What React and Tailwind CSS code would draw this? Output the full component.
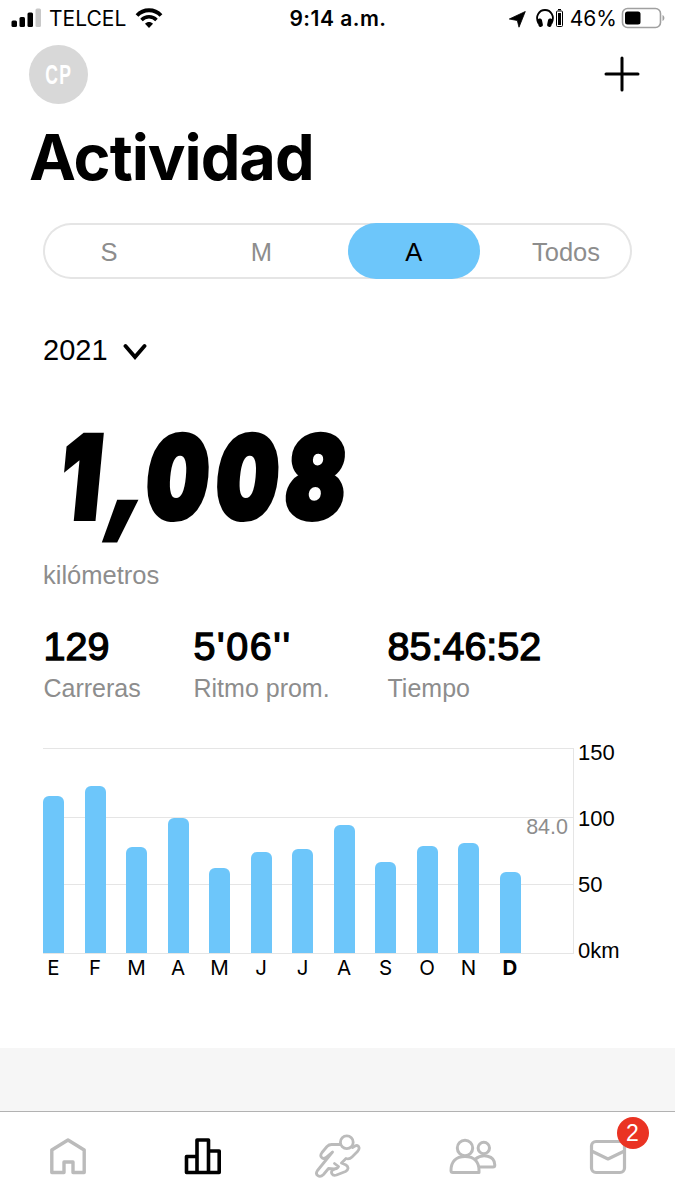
import { useState } from "react";

const ranges = ["S", "M", "A", "Todos"];

const stats = [
  { value: "129", label: "Carreras", width: "w-[150px]", tracking: "tracking-[0px]" },
  { value: "5'06''", label: "Ritmo prom.", width: "w-[194px]", tracking: "tracking-[1.6px]" },
  { value: "85:46:52", label: "Tiempo", width: "w-[200px]", tracking: "tracking-[0px]" },
];

// bar heights in px, the plot area is 205px for 150km
const months = [
  { name: "E", height: 157 },
  { name: "F", height: 167 },
  { name: "M", height: 106 },
  { name: "A", height: 135.5 },
  { name: "M", height: 85 },
  { name: "J", height: 101 },
  { name: "J", height: 104 },
  { name: "A", height: 128 },
  { name: "S", height: 91 },
  { name: "O", height: 107.5 },
  { name: "N", height: 110 },
  { name: "D", height: 81 },
];

const StatusBar = () => (
  <div className="flex h-[38px] items-center justify-between pl-[11px] pr-[10px] font-['Inter',sans-serif] text-[21px] text-black">
    <div className="flex w-[240px] items-center">
      <svg width="31" height="20" viewBox="0 0 31 20" className="mt-[-2px]">
        <rect x="0.500" y="12.5" width="5.500" height="6.5" rx="1.5" />
        <rect x="8.500" y="9" width="5.500" height="10" rx="1.5" />
        <rect x="16.500" y="4.500" width="5.500" height="14.500" rx="1.5" />
        <rect x="24.500" y="0.5" width="5.500" height="18.5" rx="1.5" fill="#c8c8c8" />
      </svg>
      <span className="ml-[7px]">TELCEL</span>
      <svg width="28" height="20" viewBox="0 0 28 20" className="ml-[9px] mt-[-2px]">
        <path d="M2 7.5C8.500 0.500 19.500 0.500 26 7.500" fill="none" stroke="#000" strokeWidth="3.800" />
        <path d="M6.500 12C10.500 7.700 17.500 7.700 21.500 12" fill="none" stroke="#000" strokeWidth="3.400" />
        <path d="M14 20l-4-4.200c2.200-2.300 5.800-2.300 8 0z" />
      </svg>
    </div>
    <span className="font-semibold tracking-[0.5px]">9:14 a.m.</span>
    <div className="flex w-[240px] items-center justify-end">
      <svg width="17" height="17" viewBox="0 0 17 17">
        <path d="M16.300 0.500 L10 16.200 L8.300 9.500 L0.300 8 Z" strokeLinejoin="round" stroke="#000" strokeWidth="0.800" />
      </svg>
      <svg width="28" height="20" viewBox="0 0 28 20" className="ml-[10px] mt-[-2px]">
        <path d="M2.600 15.500C-1.500 8 3.500 2 9 2s10.500 6 6.400 13.500" fill="none" stroke="#000" strokeWidth="1.800" />
        <rect x="2" y="10.500" width="4.500" height="8.500" rx="2" transform="rotate(-12 4 15)" />
        <rect x="11.500" y="10.500" width="4.500" height="8.500" rx="2" transform="rotate(12 14 15)" />
        <rect x="20.500" y="3" width="6" height="15.500" rx="1" fill="none" stroke="#000" />
        <rect x="22" y="5" width="3" height="12" />
        <rect x="22" y="1" width="3" height="1.200" />
      </svg>
      <span className="ml-[6px]">46%</span>
      <svg width="44" height="22" viewBox="0 0 44 22" className="ml-[4px] mt-[-2px]">
        <rect x="1.500" y="1.500" width="38" height="19" rx="5" fill="none" stroke="#a0a0a0" strokeWidth="1.600" />
        <rect x="4" y="4.500" width="15.500" height="13" rx="2.500" />
        <path d="M41.500 8c2.500 1 2.500 5 0 6z" fill="#a0a0a0" />
      </svg>
    </div>
  </div>
);

const RangeTabs = ({ active, onChange }) => (
  <div className="ml-[43px] mt-[36px] flex h-[56px] w-[589px] justify-between rounded-[28px] inset-ring-2 inset-ring-[#e5e5e5]">
    {ranges.map((range) => (
      <button
        key={range}
        onClick={() => onChange(range)}
        className={`w-[132px] rounded-[28px] pt-[3px] text-[25.5px] ${
          active === range ? "bg-[#6dc6fa] text-black" : "text-[#8d8d8d]"
        }`}
      >
        {range}
      </button>
    ))}
  </div>
);

const Chart = () => (
  <div className="ml-[43px] mt-[45px] flex h-[240px]">
    <div className="w-[531px]">
      <div className="grid h-[206px]">
        {/* Grid lines */}
        <div className="col-start-1 row-start-1 flex flex-col border-y border-r border-[#e5e5e5]">
          <div className="h-[69px] border-b border-[#e5e5e5]" />
          <div className="h-[67px] border-b border-[#e5e5e5] pr-[5px] text-right text-[21.5px] leading-[18px] text-[#8d8d8d]">
            84.0
          </div>
        </div>
        <div className="col-start-1 row-start-1 flex items-end gap-[20.5px] pb-px">
          {months.map((month, i) => (
            <div key={i} className="w-[21px] rounded-t-[6px] bg-[#6dc6fa]" style={{ height: month.height }} />
          ))}
        </div>
      </div>
      <div className="flex gap-[20.5px] pt-[2px] text-center font-['Inter',sans-serif] text-[20.5px] leading-[24px]">
        {months.map((month, i) => (
          <span key={i} className={`flex w-[21px] justify-center ${i === 11 ? "font-bold" : ""}`}>
            {month.name}
          </span>
        ))}
      </div>
    </div>
    <div className="flex flex-col pl-[4px] text-[22px] leading-[24px]">
      <span className="mt-[-7px] h-[66px]">150</span>
      <span className="h-[66px]">100</span>
      <span className="h-[66px]">50</span>
      <span>0km</span>
    </div>
  </div>
);

const HomeIcon = () => (
  <svg width="38" height="38" viewBox="0.500 0 38 38" fill="none" stroke="#bbb" strokeWidth="3.400" strokeLinejoin="round">
    <path d="M19.500 3L35.700 13V35.500H24.500V25H15.500V35.500H3.300V13Z" />
  </svg>
);

const ActivityIcon = () => (
  <svg width="38" height="38" viewBox="0.500 0 38 38" fill="none" stroke="#000" strokeWidth="3.600" strokeLinejoin="round">
    <path d="M13.500 35.500H3V19.500H13.500M13.500 35.500V3H25V35.500ZM25 14H35.700V35.500H25" />
  </svg>
);

const RunIcon = () => (
  <svg width="46" height="46" viewBox="0 0 46 46" fill="none" stroke="#bbb" strokeWidth="2.800" strokeLinejoin="round" strokeLinecap="round">
    <circle cx="31.800" cy="9.300" r="6.400" />
    <path d="M25.500 11.500H16.500Q14 11.500 12 13.500L7 19.500C4 23.500 7.500 27 11 24.500L17.500 19L2.500 37.500C-0.500 42 4.500 45.500 8.500 41.500L13.500 35.500L19 36Q22 36 23.500 33.500L19.500 30.500" />
    <path d="M37.500 14.500L40 13Q43 11.500 44 14.500Q44.500 16.500 42.500 18.500L37 24Q34.500 26.500 31 25.500L26.500 30L31 32C34 34 33.500 37 30.500 38.500L21.500 42C17 43.500 14.500 38.500 18.500 36.500" />
  </svg>
);

const FriendsIcon = () => (
  <svg width="48" height="38" viewBox="0 0 48 38" fill="none" stroke="#bbb" strokeWidth="3" strokeLinejoin="round">
    <circle cx="16" cy="11" r="7.700" />
    <circle cx="34.800" cy="11" r="5.700" />
    <path d="M4 35.500Q2 35.500 2 33.500C2 25 6.500 19.500 16 19.500S30 25 30 33.500V35.500Z" />
    <path d="M26.500 22C33 16.500 45.800 18 45.800 28Q45.800 30 44 30H30" />
  </svg>
);

const InboxIcon = () => (
  <svg width="38" height="38" viewBox="0.500 0 38 38" fill="none" stroke="#bbb" strokeWidth="3.200" strokeLinejoin="round">
    <rect x="3" y="4.500" width="33" height="31" rx="4.500" />
    <path d="M3 14L19.500 22L36 14" />
  </svg>
);

const App = () => {
  const [range, setRange] = useState("A");

  return (
    <div className="flex h-[1200px] w-[675px] flex-col overflow-hidden bg-white font-['Liberation_Sans',Arial,sans-serif] text-black">
      <StatusBar />

      <div className="flex h-[73px] items-center justify-between pl-[29px] pr-[35px]">
        <div className="flex size-[59px] items-center justify-center rounded-full bg-[#d8d8d8] pt-[2px] pl-[1px] text-white">
          <span className="scale-x-[0.65] text-[27px] font-bold tracking-[2px]">CP</span>
        </div>
        <svg width="36" height="36" viewBox="0 0 36 36" stroke="#000" strokeWidth="3" strokeLinecap="round" className="mt-[-2px]">
          <path d="M18 2V34M2 18H34" />
        </svg>
      </div>

      <h1 className="ml-[29px] mt-[6px] h-[70px] font-['Inter',sans-serif] text-[63px] leading-[81px] font-bold tracking-[-1px]">
        Actividad
      </h1>

      <RangeTabs active={range} onChange={setRange} />

      <button className="ml-[43px] mt-[54px] flex h-[36px] items-center gap-[15px] text-[29px]">
        2021
        <svg width="24" height="17" viewBox="0 0 24 17" fill="none" stroke="#000" strokeWidth="3.800" strokeLinecap="round">
          <path d="M2.500 3L12 14L21.500 3" />
        </svg>
      </button>

      <div className="ml-[56px] mt-[43px] h-[149px] w-[320px]">
        <div className="flex w-[420px] origin-bottom-left scale-x-[0.770] -skew-x-[7deg] font-['Inter',sans-serif] text-[113px] leading-[130px] font-black tracking-[10.5px] [-webkit-text-stroke:6px_black]">
          <span>1</span>
          <span className="mt-[-2px] mr-[-27px] ml-[23px] origin-top -skew-x-[12deg]">,</span>
          <span>008</span>
        </div>
      </div>
      <p className="ml-[43px] h-[28px] text-[25.5px] leading-[28px] text-[#8d8d8d]">kilómetros</p>

      <div className="ml-[43px] mt-[34px] flex h-[80px]">
        {stats.map((stat) => (
          <div key={stat.label} className={`pl-[0.5px] ${stat.width}`}>
            <div className={`text-[39.5px] leading-[46px] [-webkit-text-stroke:1.3px_black] ${stat.tracking}`}>
              {stat.value}
            </div>
            <div className="text-[25px] leading-[38px] text-[#8d8d8d]">{stat.label}</div>
          </div>
        ))}
      </div>

      <Chart />

      <div className="mt-auto h-[63px] bg-[#f6f6f6]" />
      <nav className="grid h-[89px] shrink-0 grid-cols-5 items-center justify-items-center border-t border-[#b2b2b2]">
        <HomeIcon />
        <ActivityIcon />
        <RunIcon />
        <FriendsIcon />
        <div className="relative">
          <InboxIcon />
          <span className="absolute top-[-20px] left-[28px] flex size-[32px] items-center justify-center rounded-full bg-[#ea3323] text-[23px] text-white">
            2
          </span>
        </div>
      </nav>
    </div>
  );
};

export default App;
